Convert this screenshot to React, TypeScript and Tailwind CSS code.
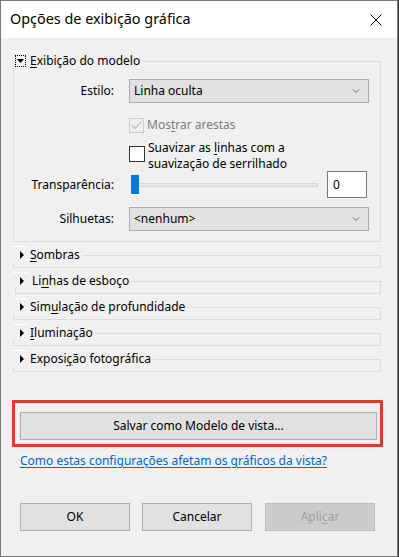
import { ChevronDown } from 'lucide-react'

const font = { fontFamily: '"Noto Sans", "Liberation Sans", sans-serif' }

function U({ children }: { children: React.ReactNode }) {
  return <span className="underline underline-offset-2">{children}</span>
}

function Section({ label, shift = 0 }: { label: React.ReactNode; shift?: number }) {
  return (
    <div className="mt-[4px] w-[368px]">
      <div className="h-px w-[15px] bg-white" />
      <div className="flex h-[15px] items-center">
        <svg width="4" height="8" viewBox="0 0 4 8" className="ml-[7px] shrink-0">
          <path d="M0 0 L4 4 L0 8 Z" fill="#000" />
        </svg>
        <span className={shift ? 'ml-[8px] mr-[2px]' : 'ml-[6px] mr-[2px]'}>{label}</span>
        <div className="h-[7px] flex-1 self-end border-r border-t border-[#dcdcdc]" />
      </div>
      <div className={`h-[6px] border-b border-r border-[#dcdcdc] ${shift ? 'ml-[2px] border-l' : 'border-l'}`} />
    </div>
  )
}

function Select({ value }: { value: string }) {
  return (
    <div className="ml-[15px] flex h-[24px] w-[240px] items-center justify-between border border-[#adadad] bg-[#e1e1e1] pl-[4px] pr-[6px]">
      <span>{value}</span>
      <ChevronDown className="h-[12px] w-[12px] text-[#333]" strokeWidth={1.2} />
    </div>
  )
}

function Btn({ children, disabled = false }: { children: React.ReactNode; disabled?: boolean }) {
  return (
    <div
      className={`flex h-[28px] w-[110px] items-center justify-center border ${
        disabled ? 'border-[#bfbfbf] bg-[#cccccc] text-[#a0a0a0]' : 'border-[#adadad] bg-[#e1e1e1] text-black'
      }`}
    >
      {children}
    </div>
  )
}

export default function App() {
  return (
    <div className="h-[557px] w-[399px] bg-[#3a3a3a] text-[12px] text-black" style={font}>
      <div className="flex h-[557px] w-[398px] flex-col border border-[#7a7a7a] bg-[#f0f0f0]">
        {/* Title bar */}
        <div className="flex h-[37px] shrink-0 items-center justify-between bg-white pl-[9px] pr-[15px]">
          <span className="text-[14.4px] leading-none">Opções de exibição gráfica</span>
          <svg width="12" height="12" viewBox="0 0 12 12">
            <path d="M0.5 0.5 L11.5 11.5 M11.5 0.5 L0.5 11.5" stroke="#000" strokeWidth="1" />
          </svg>
        </div>

        <div className="flex flex-1 flex-col pl-[12px]">
          {/* Model display group */}
          <div className="mt-[14px] w-[368px]">
            <div className="h-px w-[15px] bg-white" />
            <div className="flex h-[15px] items-center">
              <div className="ml-[2px] flex h-[12px] w-[11px] items-center justify-center border border-dotted border-black">
                <svg width="7" height="4" viewBox="0 0 7 4">
                  <path d="M0 0 L7 0 L3.5 4 Z" fill="#000" />
                </svg>
              </div>
              <span className="ml-[4px] mr-[2px]">
                <U>E</U>xibição do modelo
              </span>
              <div className="h-[7px] flex-1 self-end border-r border-t border-[#dcdcdc]" />
            </div>
            <div className="h-[174px] border-x border-b border-[#dcdcdc] pt-[11px]">
              <div className="flex items-center">
                <span className="w-[100px] text-right">Estilo:</span>
                <Select value="Linha oculta" />
              </div>

              <div className="ml-[115px] mt-[14px] flex h-[16px] items-center">
                <div className="flex h-[15px] w-[15px] items-center justify-center border border-[#cccccc]">
                  <svg width="11" height="9" viewBox="0 0 11 9">
                    <path d="M1 4.5 L4 7.5 L10 1" stroke="#c4c4c4" strokeWidth="1.4" fill="none" />
                  </svg>
                </div>
                <span className="ml-[3px] text-[#7d7d7d]">
                  Mos<U>t</U>rar arestas
                </span>
              </div>

              <div className="ml-[115px] mt-[7px] flex h-[32px] items-start">
                <div className="mt-[6px] h-[16px] w-[16px] shrink-0 border border-[#333] bg-white" />
                <div className="ml-[3px] flex flex-col leading-[16px]">
                  <span>
                    Suavizar as <U>l</U>inhas com a
                  </span>
                  <span>suavização de serrilhado</span>
                </div>
              </div>

              <div className="-mt-[1px] flex items-center">
                <span className="ml-[14px] w-[86px] text-right">Transparência:</span>
                <div className="relative ml-[17px] flex h-[19px] w-[187px] items-center">
                  <div className="h-[4px] w-full border border-[#d6d6d6] bg-[#e7e7e7]" />
                  <div className="absolute left-0 top-0 h-[19px] w-[8px] bg-[#0078d7]" />
                </div>
                <div className="ml-[9px] flex h-[27px] w-[40px] items-center border border-[#7a7a7a] bg-white pl-[5px]">
                  0
                </div>
              </div>

              <div className="mt-[9px] flex items-center">
                <span className="w-[100px] text-right">Silhuetas:</span>
                <Select value="<nenhum>" />
              </div>
            </div>
          </div>

          <Section label={<><U>S</U>ombras</>} />
          <Section label={<>Li<U>n</U>has de esboço</>} shift={2} />
          <Section label={<>Sim<U>u</U>lação de profundidade</>} />
          <Section label={<><U>I</U>luminação</>} />
          <Section label={<>Exposi<U>ç</U>ão fotográfica</>} />

          {/* Save as template */}
          <div className="-ml-[1px] mt-[28px] w-[371px] border-[3px] border-[#e03a2a] pb-[4px] pl-[5px] pr-[3px] pt-[9px]">
            <div className="flex h-[28px] items-center justify-center border border-[#adadad] bg-[#e1e1e1]">
              Salvar como Modelo de vista...
            </div>
          </div>

          <a className="ml-[7px] mt-[5px] w-fit text-[#0066cc] underline underline-offset-2">
            Como estas configurações afetam os gráficos da vista?
          </a>

          <div className="ml-[7px] mt-[33px] flex gap-[12px]">
            <Btn>OK</Btn>
            <Btn>Cancelar</Btn>
            <div className="ml-[1px]">
              <Btn disabled>
                Apli<U>c</U>ar
              </Btn>
            </div>
          </div>
        </div>
      </div>
    </div>
  )
}
